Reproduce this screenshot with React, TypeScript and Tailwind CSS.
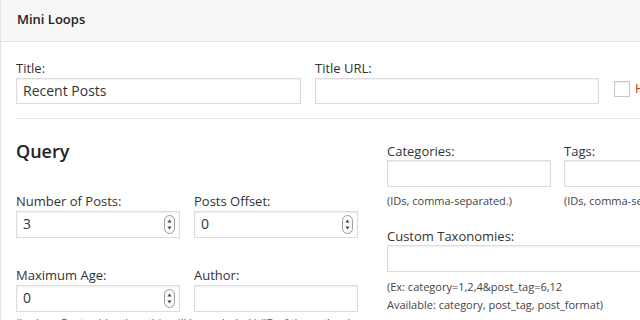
import React from 'react';

const Spinner: React.FC = () => (
  <svg width="11" height="19" viewBox="0 0 11 19" className="absolute right-[4px] top-[3px]">
    <rect x="0.5" y="0.5" width="10" height="18" rx="5" fill="#fafafa" stroke="#9a9a9a" />
    <path d="M3.5 7.5 L5.5 4.5 L7.5 7.5 Z" fill="#444" />
    <path d="M3.5 11.5 L5.5 14.5 L7.5 11.5 Z" fill="#444" />
  </svg>
);

const Field: React.FC<{ label: string; value?: string; width: string; spinner?: boolean; tall?: boolean }> = ({
  label,
  value,
  width,
  spinner,
  tall,
}) => (
  <div className={`${width} shrink-0`}>
    <div className="text-[13px] leading-[18px] text-[#333]">{label}</div>
    <div
      className={`relative mt-px ${tall ? 'h-[27px]' : 'h-[26px]'} border border-[#dcdcdc] bg-white shadow-[inset_0_1px_2px_rgba(0,0,0,0.07)] px-[6px] text-[14px] leading-[24px] text-[#333]`}
    >
      {value}
      {spinner && <Spinner />}
    </div>
  </div>
);

const App: React.FC = () => {
  return (
    <div className="w-[640px] h-[320px] overflow-hidden bg-white border-l border-[#e5e5e5] font-['Open_Sans',sans-serif] text-[#333]">
      <header className="h-[42px] bg-[#f7f7f7] border-b border-[#e5e5e5] pl-[16px] flex items-center">
        <h3 className="text-[13px] font-semibold text-[#222] -mt-px">Mini Loops</h3>
      </header>

      <div className="pl-[15px]">
        <div className="flex pt-[17px] w-[800px]">
          <Field label="Title:" value="Recent Posts" width="w-[285px]" />
          <div className="w-[14px] shrink-0" />
          <Field label="Title URL:" width="w-[284px]" />
          <div className="shrink-0 ml-[15px] mt-[22px] w-[16px] h-[16px] border border-[#c8c8c8] bg-white shadow-[inset_0_1px_2px_rgba(0,0,0,0.08)]" />
          <span className="ml-[5px] mt-[20px] text-[13px] leading-[18px] text-[#c0392b]">Hide Title</span>
        </div>

        <div className="mt-[14px] border-t border-[#e5e5e5]" />

        <div className="flex w-[900px]">
          <div className="w-[342px] shrink-0">
            <h2 className="mt-[20px] text-[18px] leading-[24px] font-semibold text-[#222]">Query</h2>
            <div className="flex gap-[14px] mt-[29px]">
              <Field label="Number of Posts:" value="3" width="w-[164px]" spinner tall />
              <Field label="Posts Offset:" value="0" width="w-[164px]" spinner tall />
            </div>
            <div className="flex gap-[14px] mt-[28px]">
              <Field label="Maximum Age:" value="0" width="w-[164px]" spinner tall />
              <Field label="Author:" width="w-[164px]" tall />
            </div>
            <p className="mt-[3px] text-[11px] leading-[16px] text-[#555]">
              (In days. Posts older than this will be excluded.) (ID of the author.)
            </p>
          </div>

          <div className="ml-[29px] w-[520px] shrink-0">
            <div className="flex gap-[13px] mt-[23px]">
              <div className="w-[164px] shrink-0">
                <div className="text-[13px] leading-[18px]">Categories:</div>
                <div className="h-[27px] border border-[#dcdcdc] shadow-[inset_0_1px_2px_rgba(0,0,0,0.07)]" />
                <div className="mt-[6px] text-[11px] leading-[16px] text-[#444]">(IDs, comma-separated.)</div>
              </div>
              <div className="w-[164px] shrink-0">
                <div className="text-[13px] leading-[18px]">Tags:</div>
                <div className="h-[27px] border border-[#dcdcdc] shadow-[inset_0_1px_2px_rgba(0,0,0,0.07)]" />
                <div className="mt-[6px] text-[11px] leading-[16px] text-[#444]">(IDs, comma-separated.)</div>
              </div>
            </div>
            <div className="mt-[18px] text-[13px] leading-[18px]">Custom Taxonomies:</div>
            <div className="h-[27px] w-[400px] border border-[#dcdcdc] shadow-[inset_0_1px_2px_rgba(0,0,0,0.07)]" />
            <div className="mt-[6px] text-[11px] leading-[18px] text-[#444]">
              (Ex: category=1,2,4&amp;post_tag=6,12
              <br />
              Available: category, post_tag, post_format)
            </div>
          </div>
        </div>
      </div>
    </div>
  );
};

export default App;
